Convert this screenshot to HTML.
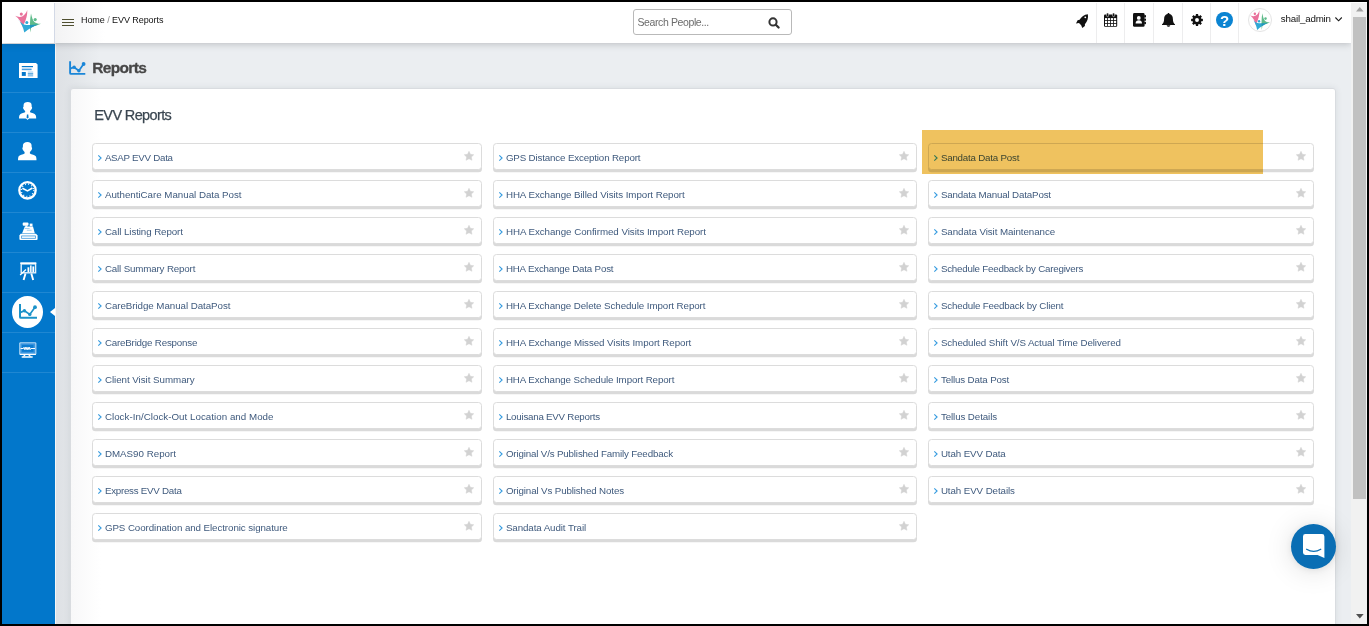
<!DOCTYPE html>
<html lang="en">
<head>
<meta charset="utf-8">
<title>EVV Reports</title>
<style>
*{box-sizing:border-box;margin:0;padding:0}
html,body{width:1369px;height:626px;overflow:hidden;background:#ebeef1}
body{position:relative;font-family:"Liberation Sans",sans-serif;color:#333}
.abs{position:absolute}
svg{display:block;position:absolute;overflow:visible}
/* frame */
.bt{left:0;top:0;width:1369px;height:2px;background:#000;z-index:50}
.bb{left:0;top:624px;width:1369px;height:2px;background:#000;z-index:50}
.bl{left:0;top:0;width:2px;height:626px;background:#000;z-index:50}
.br{left:1367px;top:0;width:2px;height:626px;background:#000;z-index:50}
/* header */
.hdr{left:2px;top:2px;width:1349px;height:41px;background:#fff;box-shadow:0 1px 7px rgba(50,52,58,.27);z-index:5}
.hgrad{left:55px;top:2px;width:50px;height:41px;background:linear-gradient(90deg,#f3f3f4,#fff);z-index:6}
.logo{left:2px;top:2px;width:53px;height:41px;background:#fff;border-right:1px solid #d3d9e6;z-index:7}
.crumb{left:81px;top:13.5px;font-size:9px;line-height:12px;color:#111;white-space:nowrap;z-index:8}
.crumb i{font-style:normal;color:#888}
.search{left:633px;top:9px;width:159px;height:26px;border:1px solid #b9b9b9;border-radius:3px;background:#fff;z-index:8}
.search span{position:absolute;left:3.5px;top:6px;font-size:10.5px;line-height:13px;color:#6c6c6c;white-space:nowrap}
.div{top:3px;width:1px;height:40px;background:#ededee;z-index:8}
.user{left:1280.8px;top:11.5px;font-size:9.75px;line-height:13px;color:#111;white-space:nowrap;z-index:8}
.ava{left:1248px;top:8px;width:24px;height:24px;border-radius:50%;border:1px solid #e4e4e4;background:#fff;z-index:8}
/* sidebar */
.side{left:2px;top:43.5px;width:53px;height:581px;background:#0277cb;z-index:4}
.sep{left:2px;width:53px;height:1px;background:#1f87d2;z-index:5}
.sshadow{left:55px;top:43px;width:45px;height:581px;background:linear-gradient(90deg,rgba(255,255,255,.5) 0,rgba(255,255,255,.5) 1px,rgba(110,115,125,.1) 1px,rgba(110,115,125,.08) 16px,rgba(110,115,125,0) 100%);z-index:0}
.act{left:12px;top:295.9px;width:31px;height:32.2px;border-radius:50%;background:#fff;z-index:6}
.tri{left:49.8px;top:307.6px;width:0;height:0;border-top:4.8px solid transparent;border-bottom:4.8px solid transparent;border-right:5.2px solid #fff;z-index:6}
/* main */
.title{left:92.3px;top:57.9px;font-size:15.5px;line-height:19px;font-weight:700;color:#474747;-webkit-text-stroke:.3px #474747;white-space:nowrap;z-index:2}
.panel{left:70px;top:88px;width:1265.5px;height:560px;background:linear-gradient(90deg,#f8f8f9 0,#fff 30px);border:1px solid #d9dce0;border-radius:3px;box-shadow:0 0 6px rgba(60,65,75,.1);z-index:1}
.ptitle{left:94.3px;top:106.7px;font-size:14.5px;line-height:17px;color:#3a4651;white-space:nowrap;z-index:2;-webkit-text-stroke:.25px #3a4651}
.col{top:143px;z-index:2}
.it{position:relative;height:27px;margin-bottom:10px;border:1px solid #dcdcdc;border-radius:3.5px;background:#fff;box-shadow:0 2.3px 0 #dadada}
.it a{position:absolute;left:11.9px;top:8.2px;font-size:9.75px;line-height:12px;color:#3f5a7d;white-space:nowrap}
.it .chev{left:5.2px;top:11.4px;width:4px;height:6px}
.it .star{right:7.3px;top:7px;width:10px;height:9.5px}
.hl{left:922px;top:130px;width:341px;height:44px;background:#efc25f;mix-blend-mode:multiply;z-index:9}
/* chat */
.chat{left:1290.8px;top:523.6px;width:45.4px;height:45.4px;border-radius:50%;background:#0a6eb4;box-shadow:0 1px 6px rgba(0,0,0,.08),0 2px 28px rgba(0,0,0,.13);z-index:12}
/* scrollbar */
.track{left:1351px;top:3px;width:16px;height:621px;background:#f1f1f1;z-index:20}
.thumb{left:1353px;top:17px;width:13px;height:482px;background:#c1c1c1;z-index:21}
.topgap{left:2px;top:2px;width:1365px;height:1px;background:#fff;z-index:22}
</style>
</head>
<body>
<svg width="0" height="0" style="position:absolute"><defs>
<path id="st" d="M10 0.6 L12.9 6.6 L19.5 7.5 L14.7 12.1 L15.9 18.6 L10 15.5 L4.1 18.6 L5.3 12.1 L0.5 7.5 L7.1 6.6 Z" fill="#d2d2d2" stroke="#d2d2d2" stroke-width="1" stroke-linejoin="round"/>
</defs></svg>

<div class="abs bt"></div><div class="abs bb"></div><div class="abs bl"></div><div class="abs br"></div>
<div class="abs topgap"></div>

<!-- HEADER -->
<div class="abs hdr"></div>
<div class="abs hgrad"></div>
<div class="abs logo">
<svg style="left:8px;top:3px" width="36" height="33" viewBox="0 0 36 33"><path d="M5.2 10.8 C8 12.2 10.5 12.3 12.6 11.2 C14.8 10 16.4 7.6 17.2 5 C17.6 9.5 16.2 15.5 12.4 21.8 C11.6 17.5 9 13.6 5.2 10.8 Z" fill="#e9719b"/><circle cx="11.3" cy="9.1" r="1.55" fill="#e9719b"/><path d="M7.4 13.6 C9.3 16.5 11.2 18.3 13.8 19.4 C18 20.4 23 20 28.3 19.2 C23.5 21.3 18.5 23.8 14.3 27.6 C13.6 23 11 17.8 7.4 13.6 Z" fill="#2fa9d6"/><circle cx="16.8" cy="17.6" r="1.5" fill="#2fa9d6"/><path d="M21 8.6 C22 12.5 22.6 15.5 24.4 17 C26.3 18.6 28.6 18.9 31 18.7 C27.5 20.3 24 21.3 21.2 21.4 C21 23.8 20.7 25.8 20.3 27.5 C19.8 22 19.8 14.5 21 8.6 Z" fill="#5fbb8b"/><circle cx="25.2" cy="14.6" r="1.6" fill="#5fbb8b"/><path d="M19.9 19.9 C22.5 19.9 25.5 19.6 28.3 19.2 C25.6 20.4 22.9 21.6 20.2 23.2 Z" fill="#1f97c0"/></svg>
</div>
<svg class="abs" style="left:62px;top:19px;z-index:8" width="12" height="8" viewBox="0 0 12 8"><path d="M0 0.5H12M0 3.5H12M0 6.5H12" stroke="#4f4f30" stroke-width="1" fill="none"/></svg>
<div class="abs crumb" style="letter-spacing:-0.068px">Home <i>/</i> EVV Reports</div>
<div class="abs search"><span style="letter-spacing:-0.39px">Search People...</span>
<svg style="left:134px;top:7px" width="12" height="12" viewBox="0 0 12 12"><circle cx="5" cy="4.9" r="3.6" fill="none" stroke="#333" stroke-width="2"/><path d="M7.8 7.7 L10.6 10.5" stroke="#333" stroke-width="2.3" stroke-linecap="round"/></svg>
</div>
<div class="abs div" style="left:1096px"></div>
<div class="abs div" style="left:1124px"></div>
<div class="abs div" style="left:1153px"></div>
<div class="abs div" style="left:1182px"></div>
<div class="abs div" style="left:1210px"></div>
<div class="abs div" style="left:1238px"></div>
<svg class="abs" style="left:1076px;top:13.8px;z-index:8" width="12.2" height="13.8" viewBox="0 0 12.2 13.8"><path d="M11.9 0.2 C12.5 4 11.4 7.6 8.9 10.2 L8.9 12 L6.3 13.9 L5.2 11.2 L3.0 9.0 L0 9.6 L1.6 6.2 L3.6 5.8 C5.4 2.6 8.2 0.5 11.9 0.2 Z" fill="#111"/><circle cx="9.3" cy="3.3" r="0.9" fill="#fff"/></svg>
<svg class="abs" style="left:1104px;top:13px;z-index:8" width="13.2" height="13.8" viewBox="0 0 13.2 13.8"><rect x="0" y="1.5" width="13.2" height="12.3" rx="1.1" fill="#111"/><rect x="2.6" y="0" width="2" height="3.6" rx="0.9" fill="#111" stroke="#fff" stroke-width="0.5"/><rect x="8.6" y="0" width="2" height="3.6" rx="0.9" fill="#111" stroke="#fff" stroke-width="0.5"/><rect x="1.0" y="5.1" width="2.2" height="2.1" fill="#fff"/><rect x="4.0" y="5.1" width="2.2" height="2.1" fill="#fff"/><rect x="7.0" y="5.1" width="2.2" height="2.1" fill="#fff"/><rect x="10.0" y="5.1" width="2.2" height="2.1" fill="#fff"/><rect x="1.0" y="8.0" width="2.2" height="2.1" fill="#fff"/><rect x="4.0" y="8.0" width="2.2" height="2.1" fill="#fff"/><rect x="7.0" y="8.0" width="2.2" height="2.1" fill="#fff"/><rect x="10.0" y="8.0" width="2.2" height="2.1" fill="#fff"/><rect x="1.0" y="10.899999999999999" width="2.2" height="2.1" fill="#fff"/><rect x="4.0" y="10.899999999999999" width="2.2" height="2.1" fill="#fff"/><rect x="7.0" y="10.899999999999999" width="2.2" height="2.1" fill="#fff"/><rect x="10.0" y="10.899999999999999" width="2.2" height="2.1" fill="#fff"/></svg>
<svg class="abs" style="left:1133.2px;top:13px;z-index:8" width="13" height="13.8" viewBox="0 0 13 13.8"><rect x="0" y="0" width="11.6" height="13.8" rx="1.4" fill="#111"/><rect x="11.2" y="2.0" width="1.8" height="2.4" rx="0.6" fill="#111"/><rect x="11.2" y="5.4" width="1.8" height="2.4" rx="0.6" fill="#111"/><rect x="11.2" y="8.8" width="1.8" height="2.4" rx="0.6" fill="#111"/><circle cx="5.8" cy="4.9" r="1.9" fill="#fff"/><path d="M2.6 10.6 C2.6 8.2 3.9 7.2 5.8 7.2 C7.7 7.2 9 8.2 9 10.6 Z" fill="#fff"/></svg>
<svg class="abs" style="left:1162px;top:13px;z-index:8" width="13" height="13.8" viewBox="0 0 13 13.8"><path d="M6.5 0 C7.1 0 7.5 0.45 7.5 1.05 C9.7 1.55 10.9 3.4 10.9 5.9 C10.9 8.6 11.6 10.1 13 11.3 L13 11.9 L0 11.9 L0 11.3 C1.4 10.1 2.1 8.6 2.1 5.9 C2.1 3.4 3.3 1.55 5.5 1.05 C5.5 0.45 5.9 0 6.5 0 Z" fill="#111"/><path d="M4.7 12.3 L8.3 12.3 C8.3 13.2 7.5 13.8 6.5 13.8 C5.5 13.8 4.7 13.2 4.7 12.3 Z" fill="#111"/></svg>
<svg class="abs" style="left:1191px;top:13.9px;z-index:8" width="12" height="12" viewBox="0 0 12 12"><path d="M4.83 0.12 L7.17 0.12 L7.06 1.42 L8.49 2.01 L9.33 1.01 L10.99 2.67 L9.99 3.51 L10.58 4.94 L11.88 4.83 L11.88 7.17 L10.58 7.06 L9.99 8.49 L10.99 9.33 L9.33 10.99 L8.49 9.99 L7.06 10.58 L7.17 11.88 L4.83 11.88 L4.94 10.58 L3.51 9.99 L2.67 10.99 L1.01 9.33 L2.01 8.49 L1.42 7.06 L0.12 7.17 L0.12 4.83 L1.42 4.94 L2.01 3.51 L1.01 2.67 L2.67 1.01 L3.51 2.01 L4.94 1.42 Z M7.95 6.00 A1.95 1.95 0 1 0 4.05 6.00 A1.95 1.95 0 1 0 7.95 6.00 Z" fill="#111" fill-rule="evenodd"/></svg>
<div class="abs" style="left:1216.2px;top:11.8px;width:16.6px;height:16.6px;border-radius:50%;background:#0b84d2;z-index:8"></div><div class="abs" style="left:1216.2px;top:11.8px;width:16.6px;height:16.6px;z-index:9;color:#fff;font-weight:700;font-size:15px;line-height:17px;text-align:center">?</div>
<div class="abs ava"></div>
<svg class="abs" style="left:1250px;top:9.8px;z-index:9" width="20" height="20.2" viewBox="5 4.8 26 23" preserveAspectRatio="none"><path d="M5.2 10.8 C8 12.2 10.5 12.3 12.6 11.2 C14.8 10 16.4 7.6 17.2 5 C17.6 9.5 16.2 15.5 12.4 21.8 C11.6 17.5 9 13.6 5.2 10.8 Z" fill="#e9719b"/><circle cx="11.3" cy="9.1" r="1.55" fill="#e9719b"/><path d="M7.4 13.6 C9.3 16.5 11.2 18.3 13.8 19.4 C18 20.4 23 20 28.3 19.2 C23.5 21.3 18.5 23.8 14.3 27.6 C13.6 23 11 17.8 7.4 13.6 Z" fill="#2fa9d6"/><circle cx="16.8" cy="17.6" r="1.5" fill="#2fa9d6"/><path d="M21 8.6 C22 12.5 22.6 15.5 24.4 17 C26.3 18.6 28.6 18.9 31 18.7 C27.5 20.3 24 21.3 21.2 21.4 C21 23.8 20.7 25.8 20.3 27.5 C19.8 22 19.8 14.5 21 8.6 Z" fill="#5fbb8b"/><circle cx="25.2" cy="14.6" r="1.6" fill="#5fbb8b"/><path d="M19.9 19.9 C22.5 19.9 25.5 19.6 28.3 19.2 C25.6 20.4 22.9 21.6 20.2 23.2 Z" fill="#1f97c0"/></svg>
<div class="abs user" style="letter-spacing:-0.185px">shail_admin</div>
<svg class="abs" style="left:1334.8px;top:17.2px;z-index:8" width="7.2" height="4.6" viewBox="0 0 7.2 4.6"><path d="M0.4 0.5 L3.6 3.8 L6.8 0.5" fill="none" stroke="#1a1a1a" stroke-width="1.1"/></svg>

<!-- SIDEBAR -->
<div class="abs side"></div>
<div class="abs sshadow"></div>
<div class="abs sep" style="top:92px"></div>
<div class="abs sep" style="top:132px"></div>
<div class="abs sep" style="top:172px"></div>
<div class="abs sep" style="top:212px"></div>
<div class="abs sep" style="top:252px"></div>
<div class="abs sep" style="top:292px"></div>
<div class="abs sep" style="top:332px"></div>
<div class="abs sep" style="top:372px"></div>
<div class="abs act"></div>
<div class="abs tri"></div>
<svg class="abs" style="left:19.2px;top:63.2px;z-index:6" width="18.6" height="15" viewBox="0 0 18.6 15"><path d="M0 0 H17 L18.6 1.6 V15 H0 Z" fill="#fff"/><rect x="2.8" y="3" width="11.2" height="1.2" fill="#0277cb"/><rect x="2.8" y="5.6" width="9.8" height="1.6" fill="#4a9fe0"/><rect x="2.8" y="9" width="4" height="3.9" fill="#0277cb"/><rect x="8.8" y="8.6" width="5.4" height="0.9" fill="#8cc4ee"/><rect x="8.8" y="10.4" width="5.4" height="1" fill="#0277cb"/><rect x="8.8" y="12.4" width="5.4" height="0.9" fill="#4a9fe0"/></svg>
<svg class="abs" style="left:19.4px;top:102.4px;z-index:6" width="17.2" height="18.2" viewBox="0 0 17.2 18.2"><g transform="scale(0.93 0.9)"><path d="M9.4 0 C12 0 13.6 1.2 13.6 3.6 L13.6 5.2 C14.2 5.4 14.3 6.6 13.8 7.4 C13.4 8.2 12.6 9.4 11.9 10 L11.9 11.4 C13.5 12.4 17 12.6 18 14.6 C18.4 15.6 18.5 17 18.5 18.3 L0 18.3 C0 17 0.1 15.6 0.5 14.6 C1.5 12.6 5 12.4 6.6 11.4 L6.6 10 C5.9 9.4 5.1 8.2 4.7 7.4 C4.2 6.6 4.3 5.4 4.9 5.2 L4.9 3.6 C4.9 1.2 6.8 0 9.4 0 Z" fill="#fff"/></g><path d="M7.6 12.2 L9.6 12.2 L10.0 16.6 L8.6 18.1 L7.2 16.6 Z" fill="#fff"/><path d="M7.9 12.4 L9.3 12.4 L9.6 15.8 L8.6 16.5 L7.6 15.8 Z" fill="#0277cb"/></svg>
<svg class="abs" style="left:18.4px;top:141.6px;z-index:6" width="18.5" height="18.3" viewBox="0 0 18.5 18.3"><path d="M9.4 0 C12 0 13.6 1.2 13.6 3.6 L13.6 5.2 C14.2 5.4 14.3 6.6 13.8 7.4 C13.4 8.2 12.6 9.4 11.9 10 L11.9 11.4 C13.5 12.4 17 12.6 18 14.6 C18.4 15.6 18.5 17 18.5 18.3 L0 18.3 C0 17 0.1 15.6 0.5 14.6 C1.5 12.6 5 12.4 6.6 11.4 L6.6 10 C5.9 9.4 5.1 8.2 4.7 7.4 C4.2 6.6 4.3 5.4 4.9 5.2 L4.9 3.6 C4.9 1.2 6.8 0 9.4 0 Z" fill="#fff"/></svg>
<svg class="abs" style="left:17.9px;top:181.2px;z-index:6" width="19" height="18.6" viewBox="0 0 19 18.6"><circle cx="9.5" cy="9.3" r="8.2" fill="none" stroke="#fff" stroke-width="2.3"/><circle cx="9.5" cy="9.3" r="6.3" fill="none" stroke="#fff" stroke-width="1.6" stroke-dasharray="0.9 2.4"/><path d="M4.4 7.2 L9.5 9.9 L14.4 7" fill="none" stroke="#fff" stroke-width="1.6"/></svg>
<svg class="abs" style="left:18.5px;top:221.8px;z-index:6" width="19" height="18.4" viewBox="0 0 19 18.4"><rect x="3.7" y="0.4" width="5.8" height="3.4" rx="1" fill="#fff"/><rect x="6.3" y="3.5" width="2" height="1.4" fill="#fff"/><rect x="10.7" y="1.6" width="2.8" height="2.7" fill="#fff"/><path d="M5.8 4.5 L14 4.5 L15.8 11.2 L3.1 11.2 Z" fill="#fff"/><rect x="5.6" y="6.1" width="5" height="0.8" fill="#8cc4ee"/><rect x="7.8" y="7.8" width="4.8" height="0.8" fill="#8cc4ee"/><rect x="3" y="11.1" width="12.8" height="0.6" fill="#6fb3e8"/><path d="M1.6 11.8 H17 L18.6 13.4 V17 Q18.6 18.1 17.5 18.1 H1.5 Q0.4 18.1 0.4 17 V13.4 Z" fill="#fff"/><rect x="2.1" y="13.6" width="14.8" height="3.1" rx="0.4" fill="#4a9fe0"/><rect x="2.9" y="14.4" width="13.2" height="1.5" fill="#fff"/></svg>
<svg class="abs" style="left:19.8px;top:261.9px;z-index:6" width="16.8" height="18.2" viewBox="0 0 16.8 18.2"><rect x="0.3" y="0.3" width="16" height="1.7" fill="#fff"/><rect x="1.2" y="1.9" width="14.4" height="8.9" fill="none" stroke="#fff" stroke-width="1.4" opacity=".9"/><rect x="7.5" y="5.3" width="1.8" height="4.7" fill="#fff"/><rect x="10.1" y="3.4" width="1.5" height="6.6" fill="#fff"/><rect x="12.4" y="4.4" width="1.8" height="5.6" fill="#fff"/><path d="M0.1 13 L6 7.5" stroke="#fff" stroke-width="1.2"/><path d="M5.5 11.4 L3.6 18 M11.3 11.4 L13.2 18" stroke="#fff" stroke-width="1.9" fill="none"/></svg>
<svg class="abs" style="left:19.2px;top:304.3px;z-index:7" width="18" height="14.8" viewBox="0 0 18 14.8"><path d="M1 0 V12.9 Q1 13.8 1.9 13.8 H18" fill="none" stroke="#1b92c9" stroke-width="2"/><path d="M1.6 8.4 L5.4 6.8 L10.8 10.4 L16 3.2" fill="none" stroke="#1b92c9" stroke-width="1.7"/><circle cx="5.4" cy="6.8" r="1.7" fill="#1b92c9"/><circle cx="10.8" cy="10.4" r="1.7" fill="#1b92c9"/><circle cx="16" cy="3.2" r="1.9" fill="#1b92c9"/></svg>
<svg class="abs" style="left:19.1px;top:342.1px;z-index:6" width="17.6" height="16" viewBox="0 0 17.6 16"><rect x="0.2" y="0.2" width="17.2" height="12.7" rx="1.4" fill="#b4d9f5"/><rect x="1.3" y="1.3" width="15" height="10.3" rx="0.5" fill="#3d97df"/><rect x="2.9" y="2.8" width="11.6" height="7" fill="#0b7bd0"/><rect x="0.6" y="11.9" width="16.4" height="1" rx="0.5" fill="#fff"/><path d="M1.6 6.5 H4.4 L5 5.3 L5.7 7.6 L6.4 5.3 L7.1 7.6 L7.8 5.3 L8.5 7.6 L9.2 5.3 L9.9 7.6 L10.6 5.3 L11.3 7.6 L12 6.5 H16" fill="none" stroke="#fff" stroke-width="1"/><path d="M6.2 12.9 L4.4 14.5 M9.6 12.9 L11.6 14.5" stroke="#fff" stroke-width="1.1"/><rect x="2.5" y="14.2" width="11.4" height="1.6" rx="0.8" fill="#fff"/></svg>

<!-- MAIN -->
<svg class="abs" style="left:69.4px;top:61px;z-index:2" width="16.4" height="13.9" viewBox="0 0 16.4 13.9"><path d="M1.1 0.3 V11.9 Q1.1 12.9 2.1 12.9 H16.3" fill="none" stroke="#1a86d8" stroke-width="1.9"/><path d="M1.8 7.4 L5.1 6.2 L9.9 9.7 L14.6 3" fill="none" stroke="#1a86d8" stroke-width="1.7"/><circle cx="5.1" cy="6.2" r="1.75" fill="#1a86d8"/><circle cx="9.9" cy="9.7" r="1.75" fill="#1a86d8"/><circle cx="14.6" cy="3" r="1.9" fill="#1a86d8"/></svg>
<div class="abs title" style="letter-spacing:-0.668px">Reports</div>
<div class="abs panel"></div>
<div class="abs ptitle" style="letter-spacing:-0.63px">EVV Reports</div>
<div class="abs col" style="left:92px;width:390px">
<div class="it"><svg class="chev" viewBox="0 0 4 6"><path d="M0.3 0.3 L3.1 3 L0.3 5.7" fill="none" stroke="#359be0" stroke-width="1.1"/></svg><a style="letter-spacing:-0.27px">ASAP EVV Data</a><svg class="star" viewBox="0 0 20 19"><use href="#st"/></svg></div>
<div class="it"><svg class="chev" viewBox="0 0 4 6"><path d="M0.3 0.3 L3.1 3 L0.3 5.7" fill="none" stroke="#359be0" stroke-width="1.1"/></svg><a style="letter-spacing:-0.016px">AuthentiCare Manual Data Post</a><svg class="star" viewBox="0 0 20 19"><use href="#st"/></svg></div>
<div class="it"><svg class="chev" viewBox="0 0 4 6"><path d="M0.3 0.3 L3.1 3 L0.3 5.7" fill="none" stroke="#359be0" stroke-width="1.1"/></svg><a style="letter-spacing:-0.087px">Call Listing Report</a><svg class="star" viewBox="0 0 20 19"><use href="#st"/></svg></div>
<div class="it"><svg class="chev" viewBox="0 0 4 6"><path d="M0.3 0.3 L3.1 3 L0.3 5.7" fill="none" stroke="#359be0" stroke-width="1.1"/></svg><a style="letter-spacing:-0.149px">Call Summary Report</a><svg class="star" viewBox="0 0 20 19"><use href="#st"/></svg></div>
<div class="it"><svg class="chev" viewBox="0 0 4 6"><path d="M0.3 0.3 L3.1 3 L0.3 5.7" fill="none" stroke="#359be0" stroke-width="1.1"/></svg><a style="letter-spacing:-0.05px">CareBridge Manual DataPost</a><svg class="star" viewBox="0 0 20 19"><use href="#st"/></svg></div>
<div class="it"><svg class="chev" viewBox="0 0 4 6"><path d="M0.3 0.3 L3.1 3 L0.3 5.7" fill="none" stroke="#359be0" stroke-width="1.1"/></svg><a style="letter-spacing:-0.188px">CareBridge Response</a><svg class="star" viewBox="0 0 20 19"><use href="#st"/></svg></div>
<div class="it"><svg class="chev" viewBox="0 0 4 6"><path d="M0.3 0.3 L3.1 3 L0.3 5.7" fill="none" stroke="#359be0" stroke-width="1.1"/></svg><a style="letter-spacing:-0.03px">Client Visit Summary</a><svg class="star" viewBox="0 0 20 19"><use href="#st"/></svg></div>
<div class="it"><svg class="chev" viewBox="0 0 4 6"><path d="M0.3 0.3 L3.1 3 L0.3 5.7" fill="none" stroke="#359be0" stroke-width="1.1"/></svg><a style="letter-spacing:0.033px">Clock-In/Clock-Out Location and Mode</a><svg class="star" viewBox="0 0 20 19"><use href="#st"/></svg></div>
<div class="it"><svg class="chev" viewBox="0 0 4 6"><path d="M0.3 0.3 L3.1 3 L0.3 5.7" fill="none" stroke="#359be0" stroke-width="1.1"/></svg><a style="letter-spacing:0.011px">DMAS90 Report</a><svg class="star" viewBox="0 0 20 19"><use href="#st"/></svg></div>
<div class="it"><svg class="chev" viewBox="0 0 4 6"><path d="M0.3 0.3 L3.1 3 L0.3 5.7" fill="none" stroke="#359be0" stroke-width="1.1"/></svg><a style="letter-spacing:-0.248px">Express EVV Data</a><svg class="star" viewBox="0 0 20 19"><use href="#st"/></svg></div>
<div class="it"><svg class="chev" viewBox="0 0 4 6"><path d="M0.3 0.3 L3.1 3 L0.3 5.7" fill="none" stroke="#359be0" stroke-width="1.1"/></svg><a style="letter-spacing:-0.076px">GPS Coordination and Electronic signature</a><svg class="star" viewBox="0 0 20 19"><use href="#st"/></svg></div>
</div>
<div class="abs col" style="left:493px;width:424px">
<div class="it"><svg class="chev" viewBox="0 0 4 6"><path d="M0.3 0.3 L3.1 3 L0.3 5.7" fill="none" stroke="#359be0" stroke-width="1.1"/></svg><a style="letter-spacing:-0.147px">GPS Distance Exception Report</a><svg class="star" viewBox="0 0 20 19"><use href="#st"/></svg></div>
<div class="it"><svg class="chev" viewBox="0 0 4 6"><path d="M0.3 0.3 L3.1 3 L0.3 5.7" fill="none" stroke="#359be0" stroke-width="1.1"/></svg><a style="letter-spacing:-0.052px">HHA Exchange Billed Visits Import Report</a><svg class="star" viewBox="0 0 20 19"><use href="#st"/></svg></div>
<div class="it"><svg class="chev" viewBox="0 0 4 6"><path d="M0.3 0.3 L3.1 3 L0.3 5.7" fill="none" stroke="#359be0" stroke-width="1.1"/></svg><a style="letter-spacing:-0.044px">HHA Exchange Confirmed Visits Import Report</a><svg class="star" viewBox="0 0 20 19"><use href="#st"/></svg></div>
<div class="it"><svg class="chev" viewBox="0 0 4 6"><path d="M0.3 0.3 L3.1 3 L0.3 5.7" fill="none" stroke="#359be0" stroke-width="1.1"/></svg><a style="letter-spacing:-0.189px">HHA Exchange Data Post</a><svg class="star" viewBox="0 0 20 19"><use href="#st"/></svg></div>
<div class="it"><svg class="chev" viewBox="0 0 4 6"><path d="M0.3 0.3 L3.1 3 L0.3 5.7" fill="none" stroke="#359be0" stroke-width="1.1"/></svg><a style="letter-spacing:-0.076px">HHA Exchange Delete Schedule Import Report</a><svg class="star" viewBox="0 0 20 19"><use href="#st"/></svg></div>
<div class="it"><svg class="chev" viewBox="0 0 4 6"><path d="M0.3 0.3 L3.1 3 L0.3 5.7" fill="none" stroke="#359be0" stroke-width="1.1"/></svg><a style="letter-spacing:-0.062px">HHA Exchange Missed Visits Import Report</a><svg class="star" viewBox="0 0 20 19"><use href="#st"/></svg></div>
<div class="it"><svg class="chev" viewBox="0 0 4 6"><path d="M0.3 0.3 L3.1 3 L0.3 5.7" fill="none" stroke="#359be0" stroke-width="1.1"/></svg><a style="letter-spacing:-0.095px">HHA Exchange Schedule Import Report</a><svg class="star" viewBox="0 0 20 19"><use href="#st"/></svg></div>
<div class="it"><svg class="chev" viewBox="0 0 4 6"><path d="M0.3 0.3 L3.1 3 L0.3 5.7" fill="none" stroke="#359be0" stroke-width="1.1"/></svg><a style="letter-spacing:-0.234px">Louisana EVV Reports</a><svg class="star" viewBox="0 0 20 19"><use href="#st"/></svg></div>
<div class="it"><svg class="chev" viewBox="0 0 4 6"><path d="M0.3 0.3 L3.1 3 L0.3 5.7" fill="none" stroke="#359be0" stroke-width="1.1"/></svg><a style="letter-spacing:-0.155px">Original V/s Published Family Feedback</a><svg class="star" viewBox="0 0 20 19"><use href="#st"/></svg></div>
<div class="it"><svg class="chev" viewBox="0 0 4 6"><path d="M0.3 0.3 L3.1 3 L0.3 5.7" fill="none" stroke="#359be0" stroke-width="1.1"/></svg><a style="letter-spacing:-0.123px">Original Vs Published Notes</a><svg class="star" viewBox="0 0 20 19"><use href="#st"/></svg></div>
<div class="it"><svg class="chev" viewBox="0 0 4 6"><path d="M0.3 0.3 L3.1 3 L0.3 5.7" fill="none" stroke="#359be0" stroke-width="1.1"/></svg><a style="letter-spacing:-0.086px">Sandata Audit Trail</a><svg class="star" viewBox="0 0 20 19"><use href="#st"/></svg></div>
</div>
<div class="abs col" style="left:928px;width:386px">
<div class="it"><svg class="chev" viewBox="0 0 4 6"><path d="M0.3 0.3 L3.1 3 L0.3 5.7" fill="none" stroke="#359be0" stroke-width="1.1"/></svg><a style="letter-spacing:-0.207px">Sandata Data Post</a><svg class="star" viewBox="0 0 20 19"><use href="#st"/></svg></div>
<div class="it"><svg class="chev" viewBox="0 0 4 6"><path d="M0.3 0.3 L3.1 3 L0.3 5.7" fill="none" stroke="#359be0" stroke-width="1.1"/></svg><a style="letter-spacing:-0.166px">Sandata Manual DataPost</a><svg class="star" viewBox="0 0 20 19"><use href="#st"/></svg></div>
<div class="it"><svg class="chev" viewBox="0 0 4 6"><path d="M0.3 0.3 L3.1 3 L0.3 5.7" fill="none" stroke="#359be0" stroke-width="1.1"/></svg><a style="letter-spacing:-0.066px">Sandata Visit Maintenance</a><svg class="star" viewBox="0 0 20 19"><use href="#st"/></svg></div>
<div class="it"><svg class="chev" viewBox="0 0 4 6"><path d="M0.3 0.3 L3.1 3 L0.3 5.7" fill="none" stroke="#359be0" stroke-width="1.1"/></svg><a style="letter-spacing:-0.219px">Schedule Feedback by Caregivers</a><svg class="star" viewBox="0 0 20 19"><use href="#st"/></svg></div>
<div class="it"><svg class="chev" viewBox="0 0 4 6"><path d="M0.3 0.3 L3.1 3 L0.3 5.7" fill="none" stroke="#359be0" stroke-width="1.1"/></svg><a style="letter-spacing:-0.164px">Schedule Feedback by Client</a><svg class="star" viewBox="0 0 20 19"><use href="#st"/></svg></div>
<div class="it"><svg class="chev" viewBox="0 0 4 6"><path d="M0.3 0.3 L3.1 3 L0.3 5.7" fill="none" stroke="#359be0" stroke-width="1.1"/></svg><a style="letter-spacing:-0.093px">Scheduled Shift V/S Actual Time Delivered</a><svg class="star" viewBox="0 0 20 19"><use href="#st"/></svg></div>
<div class="it"><svg class="chev" viewBox="0 0 4 6"><path d="M0.3 0.3 L3.1 3 L0.3 5.7" fill="none" stroke="#359be0" stroke-width="1.1"/></svg><a style="letter-spacing:-0.139px">Tellus Data Post</a><svg class="star" viewBox="0 0 20 19"><use href="#st"/></svg></div>
<div class="it"><svg class="chev" viewBox="0 0 4 6"><path d="M0.3 0.3 L3.1 3 L0.3 5.7" fill="none" stroke="#359be0" stroke-width="1.1"/></svg><a style="letter-spacing:-0.094px">Tellus Details</a><svg class="star" viewBox="0 0 20 19"><use href="#st"/></svg></div>
<div class="it"><svg class="chev" viewBox="0 0 4 6"><path d="M0.3 0.3 L3.1 3 L0.3 5.7" fill="none" stroke="#359be0" stroke-width="1.1"/></svg><a style="letter-spacing:-0.107px">Utah EVV Data</a><svg class="star" viewBox="0 0 20 19"><use href="#st"/></svg></div>
<div class="it"><svg class="chev" viewBox="0 0 4 6"><path d="M0.3 0.3 L3.1 3 L0.3 5.7" fill="none" stroke="#359be0" stroke-width="1.1"/></svg><a style="letter-spacing:-0.084px">Utah EVV Details</a><svg class="star" viewBox="0 0 20 19"><use href="#st"/></svg></div>
</div>
<div class="abs hl"></div>

<!-- CHAT -->
<div class="abs chat">
<svg style="left:12px;top:10.2px" width="21.4" height="24" viewBox="0 0 21.4 24"><path d="M2.4 0 H19 A2.4 2.4 0 0 1 21.4 2.4 V24 L14.6 21 H2.4 A2.4 2.4 0 0 1 0 18.6 V2.4 A2.4 2.4 0 0 1 2.4 0 Z" fill="#fff"/><path d="M3.6 15.2 Q10.7 19.6 17.8 15.2" fill="none" stroke="#0a6eb4" stroke-width="1.2" stroke-linecap="round"/></svg>
</div>

<!-- SCROLLBAR -->
<div class="abs track"></div>
<div class="abs thumb"></div>
<svg class="abs" style="left:1355.8px;top:6.8px;z-index:22" width="7.6" height="4.4" viewBox="0 0 7.6 4.4"><path d="M0 4.4 L3.8 0 L7.6 4.4 Z" fill="#a3a3a3"/></svg>
<svg class="abs" style="left:1355.6px;top:613.7px;z-index:22" width="7.7" height="4.5" viewBox="0 0 7.7 4.5"><path d="M0 0 L3.85 4.5 L7.7 0 Z" fill="#505050"/></svg>
</body>
</html>
